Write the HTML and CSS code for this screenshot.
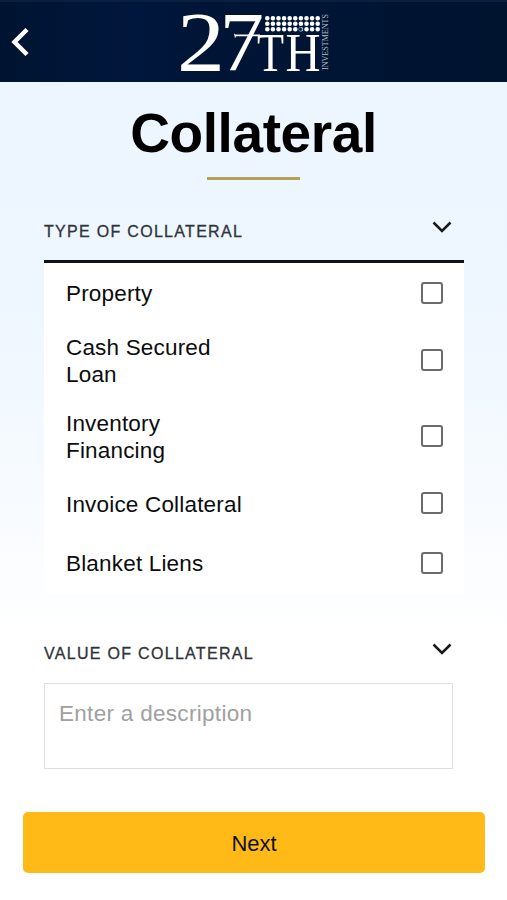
FILE: index.html
```html
<!DOCTYPE html>
<html lang="en">
<head>
<meta charset="utf-8">
<title>Collateral</title>
<link rel="stylesheet" href="styles.css">
</head>
<body>
<header class="topbar">
  <svg class="back" width="20" height="32" viewBox="0 0 20 32" role="img" aria-label="Back"><path d="M18 3.500 5.500 16 18 28.500"/></svg>
  <svg class="logo" width="156" height="80" viewBox="176 2 156 80">
    <text class="digit" x="177" y="70.800" textLength="48" lengthAdjust="spacingAndGlyphs">2</text>
    <text class="digit" x="219.500" y="70.800" textLength="44.500" lengthAdjust="spacingAndGlyphs">7</text>
    <text class="th" x="257" y="70.800" textLength="27" lengthAdjust="spacingAndGlyphs">T</text>
    <text class="th" x="285.500" y="70.800" textLength="35" lengthAdjust="spacingAndGlyphs">H</text>
    <path class="bar" d="M234 33.500l1.500 1H260v1.800h-24l-1 2z"/>
    <g class="dots">
      <path d="M267.300 18.300H318"/><path d="M267.300 23.800H318"/><path d="M267.300 29.300H318"/>
    </g>
    <circle class="accent" cx="300.400" cy="29.300" r="1.700"/>
    <text class="side" transform="translate(327.500 70) rotate(-90)" textLength="56" lengthAdjust="spacingAndGlyphs">INVESTMENTS</text>
  </svg>
</header>
<main>
  <h1>Collateral</h1>
  <div class="rule"></div>
  <section>
    <div class="section-head type-head">
      <h2>TYPE OF COLLATERAL</h2>
      <svg class="chevron" width="20" height="14" viewBox="0 0 20 14"><path d="M1.500 2.500 10 11 18.500 2.500"/></svg>
    </div>
    <div class="options">
      <label class="option"><span>Property</span><input type="checkbox"></label>
      <label class="option"><span>Cash Secured<br>Loan</span><input type="checkbox"></label>
      <label class="option"><span>Inventory<br>Financing</span><input type="checkbox"></label>
      <label class="option"><span>Invoice Collateral</span><input type="checkbox"></label>
      <label class="option"><span>Blanket Liens</span><input type="checkbox"></label>
    </div>
  </section>
  <section>
    <div class="section-head value-head">
      <h2>VALUE OF COLLATERAL</h2>
      <svg class="chevron" width="20" height="14" viewBox="0 0 20 14"><path d="M1.500 2.500 10 11 18.500 2.500"/></svg>
    </div>
    <textarea placeholder="Enter a description"></textarea>
  </section>
  <button type="button">Next</button>
</main>
</body>
</html>
```
FILE: styles.css
```css
* { box-sizing: border-box; }
body {
  margin: 0;
  height: 900px;
  overflow: hidden;
  font-family: "Liberation Sans", Arial, sans-serif;
  color: #0b0c0d;
  background: linear-gradient(#edf6ff 82px, #eef6ff 300px, #f3f9ff 420px, #fafcff 550px, #fff 640px);
}
.topbar {
  height: 82px;
  display: flex;
  align-items: flex-start;
  background: linear-gradient(90deg, #001431, #00173d 27%, #001536 40%, #001430);
  border-top: 2px solid #0a2040;
}
.back { margin: 24px 0 0 9px; fill: none; stroke: #fff; stroke-width: 4.500; }
.logo { margin-left: 147px; font-family: "Liberation Serif", serif; fill: #fff; }
.digit { font-size: 84px; }
.th { font-size: 54px; }
.side { font-size: 8px; fill: #b5bfce; }
.dots path { stroke: #fff; stroke-width: 4.600; stroke-linecap: round; stroke-dasharray: 0 5.600; fill: none; }
.accent { fill: #00173a; stroke: #2878a5; stroke-width: 1; }
main { display: flex; flex-direction: column; }
h1 {
  margin: 19px 0 0;
  font-size: 55px;
  line-height: 64px;
  letter-spacing: -.4px;
  text-align: center;
  color: #000;
}
.rule { width: 93px; height: 3px; margin: 12px 0 0 207px; background: #b3a153; }
section { margin: 0 43px 0 44px; }
.section-head { display: flex; justify-content: space-between; padding-right: 12px; }
.type-head { height: 83px; padding-top: 40px; border-bottom: 3px solid #101413; }
h2 {
  margin: 0;
  padding-top: 2px;
  font-size: 16px;
  font-weight: 400;
  line-height: 20px;
  letter-spacing: 1.300px;
  color: #2e3338;
  -webkit-text-stroke: .3px #2e3338;
}
.chevron { fill: none; stroke: #17191b; stroke-width: 2.500; }
.options { background: #fff; padding-bottom: 1px; }
.option {
  display: flex;
  align-items: center;
  justify-content: space-between;
  min-height: 59.500px;
  padding: 10.750px 21px 10.750px 22px;
  font-size: 22.500px;
  line-height: 27px;
  letter-spacing: .18px;
}
.option span { padding-top: 1px; margin-bottom: -1px; }
input {
  appearance: none;
  width: 22px;
  height: 22px;
  margin: 0;
  border: 2px solid #6b6b6b;
  border-radius: 3px;
  background: #fff;
}
.value-head { height: 89px; padding-top: 48px; }
textarea {
  display: block;
  width: 409px;
  height: 86px;
  padding: 16px 14px;
  border: 1.500px solid #dedede;
  border-radius: 0;
  outline: 0;
  resize: none;
  background: #fff;
  font: 22.500px/27px "Liberation Sans", Arial, sans-serif;
  letter-spacing: .3px;
}
textarea::placeholder { color: #a0a0a0; }
button {
  height: 61px;
  margin: 43px 22px 0 23px;
  padding: 2px 0 0;
  border: 0;
  border-radius: 5px;
  background: #ffba17;
  font: 22px/27px "Liberation Sans", Arial, sans-serif;
  color: #111;
}
```
